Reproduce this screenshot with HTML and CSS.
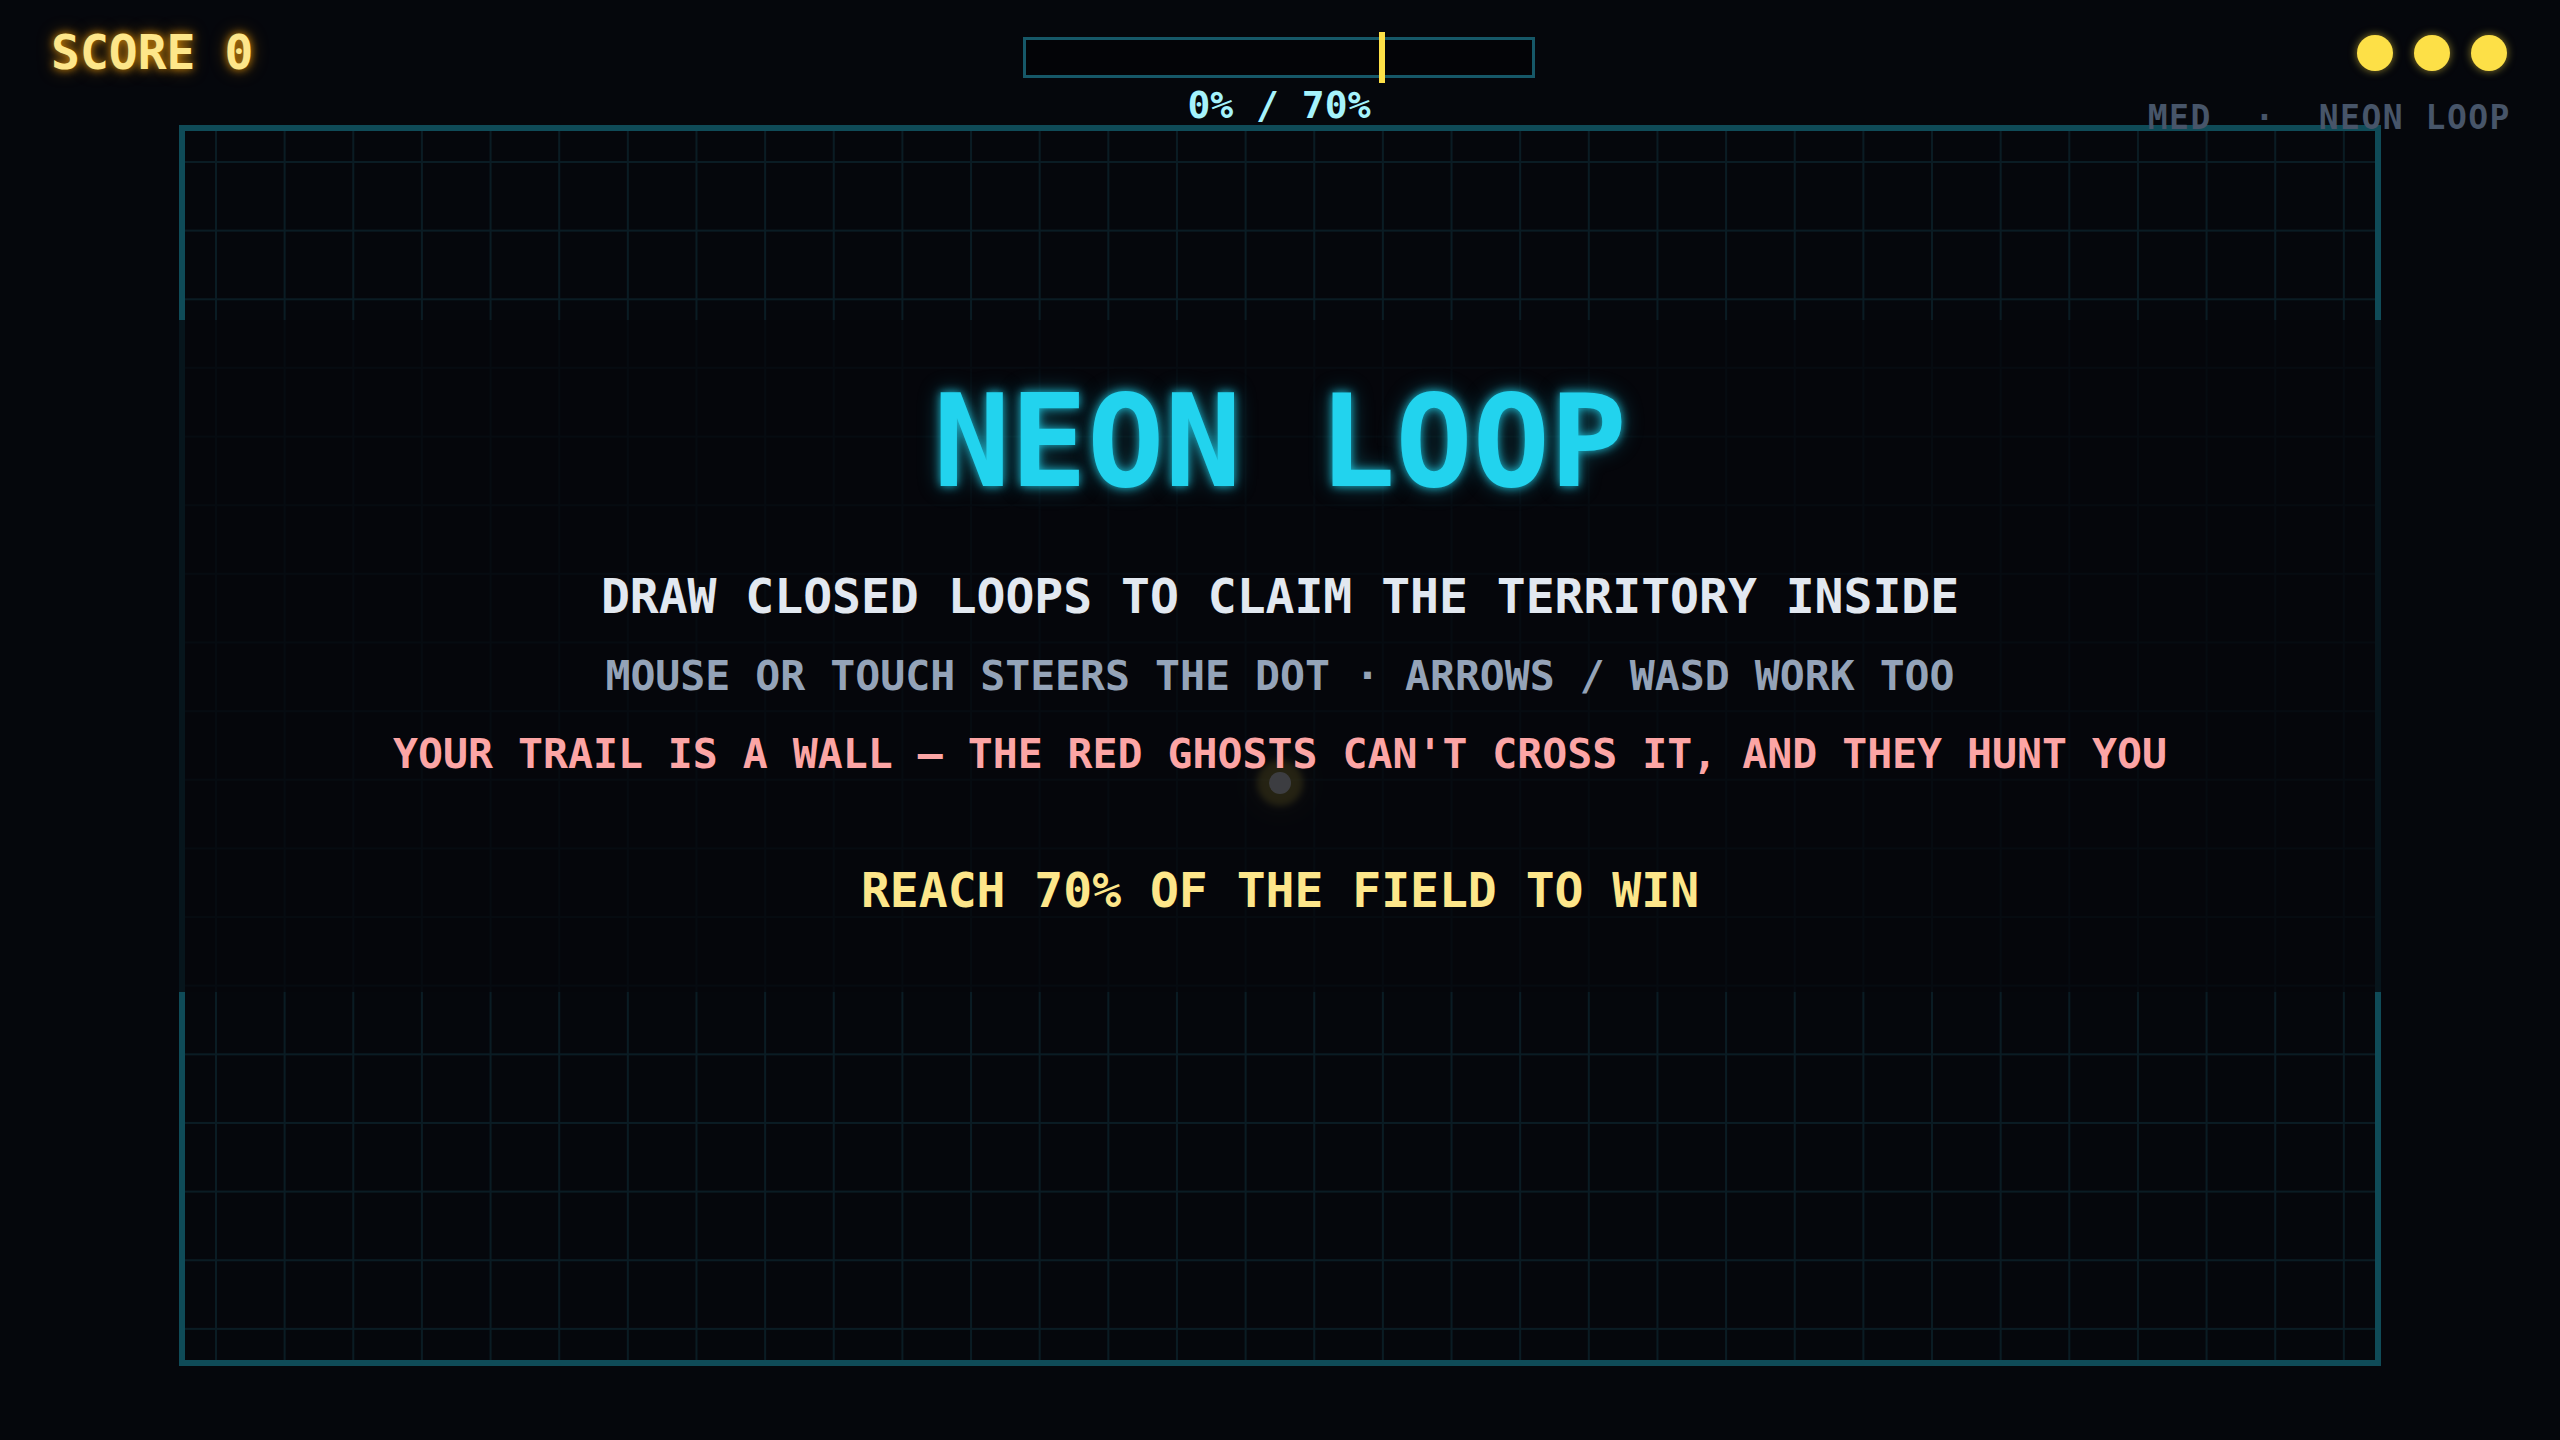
FILE: index.html
```html
<!DOCTYPE html>
<html lang="en">
<head>
<meta charset="utf-8">
<title>Neon Loop</title>
<link rel="stylesheet" href="styles.css">
</head>
<body>
<header class="hud">
  <div class="score">SCORE 0</div>
  <div class="progress">
    <div class="bar"><span class="marker"></span></div>
    <div class="pct">0% / 70%</div>
  </div>
  <div class="status">
    <div class="lives"><span class="life"></span><span class="life"></span><span class="life"></span></div>
    <div class="mode">MED  ·  NEON LOOP</div>
  </div>
</header>
<main class="field">
  <span class="player"></span>
  <section class="overlay">
    <h1 class="title">NEON LOOP</h1>
    <p class="line line-main">DRAW CLOSED LOOPS TO CLAIM THE TERRITORY INSIDE</p>
    <p class="line line-sub">MOUSE OR TOUCH STEERS THE DOT · ARROWS / WASD WORK TOO</p>
    <p class="line line-warn">YOUR TRAIL IS A WALL — THE RED GHOSTS CAN'T CROSS IT, AND THEY HUNT YOU</p>
    <p class="line line-goal">REACH 70% OF THE FIELD TO WIN</p>
  </section>
</main>
</body>
</html>
```
FILE: styles.css
```css
* { box-sizing: border-box; }
html, body {
  margin: 0;
  padding: 0;
  background: #05070c;
  width: 2560px;
  height: 1440px;
  overflow: hidden;
  font-family: "DejaVu Sans Mono", "Liberation Mono", monospace;
  font-weight: bold;
}
.hud {
  position: relative;
  z-index: 2;
  height: 125px;
  display: grid;
  grid-template-columns: 1fr auto 1fr;
  align-items: start;
  padding: 0 53px 0 51px;
}
.score {
  justify-self: start;
  margin-top: 28px;
  font-size: 48px;
  line-height: 1;
  color: #fde68a;
  text-shadow: 0 0 8px rgba(245, 158, 11, 0.85), 0 0 18px rgba(245, 158, 11, 0.4);
}
.progress {
  display: flex;
  flex-direction: column;
  align-items: center;
  margin-top: 37px;
}
.bar {
  position: relative;
  width: 512px;
  height: 41px;
  border: 3px solid #165868;
  background: #030407;
}
.marker {
  position: absolute;
  left: calc(70% - 1px);
  top: -8px;
  width: 6px;
  height: 51px;
  background: #fde047;
}
.pct {
  margin-top: 8px;
  font-size: 38px;
  line-height: 1;
  color: #a5f3fc;
}
.status {
  justify-self: end;
  display: flex;
  flex-direction: column;
  align-items: flex-end;
}
.lives {
  display: flex;
  gap: 21px;
  margin-top: 35px;
}
.life {
  width: 36px;
  height: 36px;
  border-radius: 50%;
  background: #fde047;
  box-shadow: 0 0 8px rgba(253, 224, 71, 0.55);
}
.mode {
  margin-top: 30px;
  margin-right: -4px;
  font-size: 33px;
  line-height: 1;
  letter-spacing: 1.5px;
  white-space: pre;
  color: #475569;
}
.field {
  position: relative;
  z-index: 1;
  width: 2202px;
  height: 1241px;
  margin: 0 auto;
  border: 6px solid #0f4b58;
  background-color: #05070c;
  background-image:
    linear-gradient(to right, #0a1c24 0, #0a1c24 2px, transparent 2px),
    linear-gradient(to bottom, #0a1c24 0, #0a1c24 2px, transparent 2px);
  background-size: 68.65px 68.65px;
  background-position: 30px 30px;
}
.player {
  position: absolute;
  left: 1084px;
  top: 641px;
  width: 22px;
  height: 22px;
  border-radius: 50%;
  background: #ffffff;
  box-shadow: 0 0 6px 12px rgba(253, 224, 71, 0.55), 0 0 28px 18px rgba(253, 224, 71, 0.12);
}
.overlay {
  position: absolute;
  left: -6px;
  right: -6px;
  top: 189px;
  height: 672px;
  background: rgba(5, 7, 12, 0.78);
  display: flex;
  flex-direction: column;
  align-items: center;
  padding-top: 58px;
}
.title {
  margin: 0;
  font-size: 128px;
  line-height: 1;
  font-weight: bold;
  color: #22d3ee;
  text-shadow: 0 0 10px rgba(34, 211, 238, 0.85), 0 0 22px rgba(34, 211, 238, 0.35);
}
.line {
  margin: 0;
  line-height: 1;
  white-space: pre;
}
.line-main {
  margin-top: 66px;
  font-size: 48px;
  color: #e2e8f0;
}
.line-sub {
  margin-top: 35px;
  font-size: 41.5px;
  color: #94a3b8;
}
.line-warn {
  margin-top: 36px;
  font-size: 41.5px;
  color: #fca5a5;
}
.line-goal {
  margin-top: 92px;
  font-size: 48px;
  color: #fde68a;
}
```
